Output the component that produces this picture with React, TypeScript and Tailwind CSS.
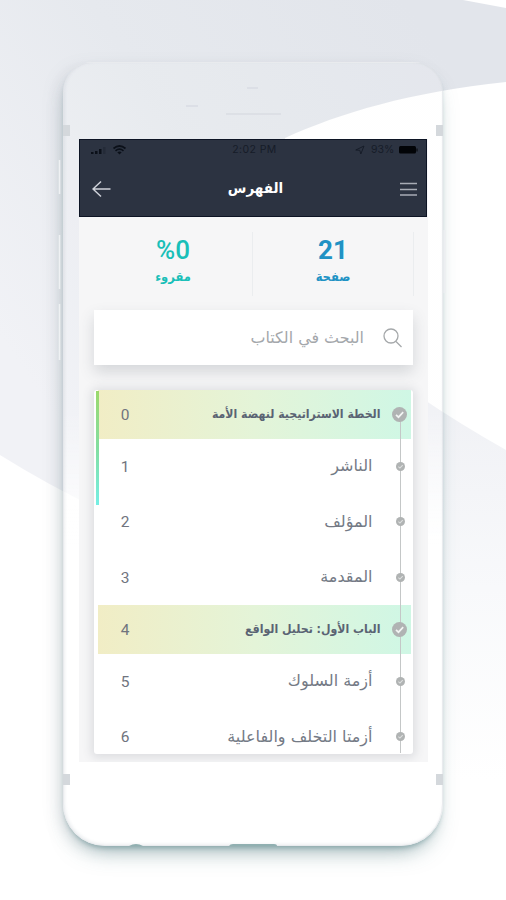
type Chapter = { title: string; page: number; section?: boolean };

const chapters: Chapter[] = [
  { title: "الخطة الاستراتيجية لنهضة الأمة", page: 0, section: true },
  { title: "الناشر", page: 1 },
  { title: "المؤلف", page: 2 },
  { title: "المقدمة", page: 3 },
  { title: "الباب الأول: تحليل الواقع", page: 4, section: true },
  { title: "أزمة السلوك", page: 5 },
  { title: "أزمتا التخلف والفاعلية", page: 6 },
];

function Backdrop() {
  return (
    <svg className="absolute inset-0" width="506" height="900" viewBox="0 0 506 900">
      <defs>
        <linearGradient id="wave" x1="0" y1="0.6" x2="0.8" y2="0">
          <stop offset="0" stopColor="#f1f2f6" />
          <stop offset="0.5" stopColor="#e6e9ee" />
          <stop offset="1" stopColor="#e2e5eb" />
        </linearGradient>
        <linearGradient id="fade" x1="0" y1="0" x2="0" y2="1">
          <stop offset="0" stopColor="#f0f1f5" />
          <stop offset="0.5" stopColor="#f8f9fb" />
          <stop offset="1" stopColor="#ffffff" />
        </linearGradient>
      </defs>
      <rect width="506" height="900" fill="#fff" />
      <path d="M0 0H463L506 8V82C410 92 340 113 285 138L240 560Q120 530 0 455Z" fill="url(#wave)" />
      <path d="M420 397Q460 424 506 450V780H420Z" fill="url(#fade)" />
    </svg>
  );
}

function PhoneDetails() {
  return (
    <svg className="absolute -left-[9px] -top-px" width="396" height="786" viewBox="55 62 396 786">
      <path d="M59.500 160V194M59.500 235V289M59.500 304V360" stroke="#eff1f3" strokeWidth="1.500" />
      <path d="M444.500 230V293" stroke="#eceef1" strokeWidth="2" />
      <path d="M63 125h7v11h-7zM436 125h7v11h-7zM63 774h7v11h-7zM436 774h7v11h-7z" fill="#d4d8dc" />
      <path d="M226 114H281" stroke="#d3d6dd" />
      <path d="M247 88H258M186 106H198" stroke="#d9dce3" strokeWidth="1.500" />
      <path d="M129 846q7 -4 14 0zM229 846q1 -2 4 -2h41q3 0 3 2z" fill="#91b0b1" />
    </svg>
  );
}

function StatusBar() {
  return (
    <div className="flex h-[20px] items-center justify-between pl-2.5 pr-2 text-[10.5px] text-[#161c28]">
      <svg width="40" height="12" viewBox="0 0 40 12">
        <path d="M1 8h2.500v2H1zM5 7h2.500v3H5zM9 5h2.500v5H9z" fill="#0b1019" />
        <path d="M13 3h2.500v7H13z" fill="#242b38" />
        <path d="M23.500 4.500Q29.500 -.5 35.500 4.500M25.500 6.800Q29.500 3.500 33.500 6.800" fill="none" stroke="#0b1019" strokeWidth="1.700" />
        <path d="M27.300 8.200Q29.500 6.800 31.700 8.200L29.500 10.500Z" fill="#0b1019" />
      </svg>
      <span className="ml-6 tracking-[0.4px]">2:02 PM</span>
      <div className="flex items-center">
        <svg width="10" height="10" viewBox="0 0 10 10" fill="none" stroke="currentColor">
          <path d="M.8 5 9 1 5.800 9 4.800 5.300Z" />
        </svg>
        <span className="ml-1.5 w-[24px]">93%</span>
        <svg className="ml-1" width="19" height="8" viewBox="0 0 19 8">
          <rect width="17" height="7.500" rx="1.500" fill="#020407" />
          <path d="M18 2.500v3" stroke="#020407" />
        </svg>
      </div>
    </div>
  );
}

function Check({ large }: { large?: boolean }) {
  return (
    <svg className="block" width={large ? 15 : 9} height={large ? 15 : 9} viewBox="0 0 15 15">
      <circle cx="7.500" cy="7.500" r="7.500" fill="#b0b3b3" />
      <path
        d="M4 7.800 6.500 10.200 11.200 5.200"
        fill="none"
        stroke={large ? "#f2f4f3" : "#dfe1e1"}
        strokeWidth="1.700"
      />
    </svg>
  );
}

function ChapterRow({ title, page, section }: Chapter) {
  return (
    <div
      className={
        section
          ? "ml-[3.500px] mr-[2px] flex h-[48.500px] shrink-0 items-center bg-linear-to-r from-[#f1edc5] via-[#e4f4d8] to-[#cff7e5] pl-[21.500px] pr-[4.500px]"
          : "flex h-[55.500px] shrink-0 items-center pl-[25px] pr-[8.500px]"
      }
    >
      <span className="w-3 pt-0.5 text-center font-[Roboto] text-[15.500px] text-[#70747e]">{page}</span>
      <span
        dir="rtl"
        className={
          section
            ? "ml-auto mr-[11px] whitespace-nowrap font-['DejaVu_Sans_Condensed','DejaVu_Sans',sans-serif] text-[12.200px] font-bold text-[#5a6373]"
            : "ml-auto mr-[23px] whitespace-nowrap text-[16px] text-[#747a85]"
        }
      >
        {title}
      </span>
      <div className="relative">
        <Check large={section} />
      </div>
    </div>
  );
}

export default function App() {
  return (
    <div className="relative h-[900px] w-[506px] overflow-hidden bg-white pl-[63px] pt-[62px] font-['DejaVu_Sans',sans-serif]">
      <Backdrop />
      <div className="relative h-[784px] w-[380px] rounded-[30px_30px_42px_42px] border border-[#dadde2]/60 bg-linear-to-b from-white/10 from-45% to-white to-62% px-[15px] pt-[76px] shadow-[-7px_4px_18px_-5px_rgba(120,128,140,0.26),0_14px_22px_-10px_rgba(65,115,120,0.5),0_4px_5px_-2px_rgba(90,140,142,0.45),inset_1px_-1px_3px_rgba(170,180,188,0.2)]">
        <PhoneDetails />
        <div className="relative flex h-[623px] w-[349px] flex-col overflow-hidden bg-[#f6f6f7]">
          <header className="mr-px h-[78px] shrink-0 border border-[#0d1424] bg-[#2c3341] font-[Inter]">
            <StatusBar />
            <div className="flex h-[57px] items-center justify-between pl-3 pr-[9px]">
              <svg width="19" height="18" viewBox="0 0 19 18" fill="none" stroke="#cfd2d9" strokeWidth="1.500">
                <path d="M18.500 9H1M9 1.500 1 9l8 7.500" />
              </svg>
              <h1 className="font-['DejaVu_Sans_Condensed','DejaVu_Sans',sans-serif] text-[15px] font-bold text-white">الفهرس</h1>
              <svg width="17" height="14" viewBox="0 0 17 14" stroke="#a8acb5" strokeWidth="1.500">
                <path d="M0 1.500h17M0 7.500h17M0 13h17" />
              </svg>
            </div>
          </header>

          {/* Book stats */}
          <div className="flex h-[93px] shrink-0 pr-[14px] pt-[15px] text-center">
            <div className="h-[64px] w-[174px] border-r border-[#ebedef] pl-[15px] text-[#19bfb8]">
              <div className="font-[Roboto] text-[26px] font-medium leading-[36px]">%0</div>
              <div className="font-['DejaVu_Sans_Condensed','DejaVu_Sans',sans-serif] text-[12.800px] font-bold leading-[18px]">مقروء</div>
            </div>
            <div className="h-[64px] flex-1 border-r border-[#ebedef] text-[#2092c4]">
              <div className="font-[Roboto] text-[26px] font-bold leading-[36px]">21</div>
              <div className="font-['DejaVu_Sans_Condensed','DejaVu_Sans',sans-serif] text-[12.800px] font-bold leading-[18px]">صفحة</div>
            </div>
          </div>

          <div className="mx-[15px] flex h-[55px] shrink-0 items-center justify-end bg-white pr-[11px] shadow-[0_7px_14px_rgba(60,70,85,0.18)]">
            <span dir="rtl" className="mr-[19px] text-[15.900px] text-[#a4a7ab]">البحث في الكتاب</span>
            <svg width="19" height="20" viewBox="0 0 19 20" fill="none" stroke="#a5a8aa" strokeWidth="1.300">
              <circle cx="8" cy="8" r="7" />
              <path d="m13 13.500 5.500 5.500" />
            </svg>
          </div>

          {/* Chapter index */}
          <div className="relative mx-[15px] mt-[25px] flex h-[364px] shrink-0 flex-col overflow-hidden rounded-[3px] bg-white shadow-[0_1px_10px_3px_rgba(60,70,85,0.13)]">
            <div className="absolute left-[2px] top-px h-[114px] w-[3px] bg-linear-to-b from-[#9bd96b] via-[#82dea0] to-[#75efe5]" />
            <div className="absolute right-[12.500px] top-6 h-[339px] w-px bg-[#c4c7c7]" />
            {chapters.map((chapter) => (
              <ChapterRow key={chapter.page} {...chapter} />
            ))}
          </div>
        </div>
      </div>
    </div>
  );
}
